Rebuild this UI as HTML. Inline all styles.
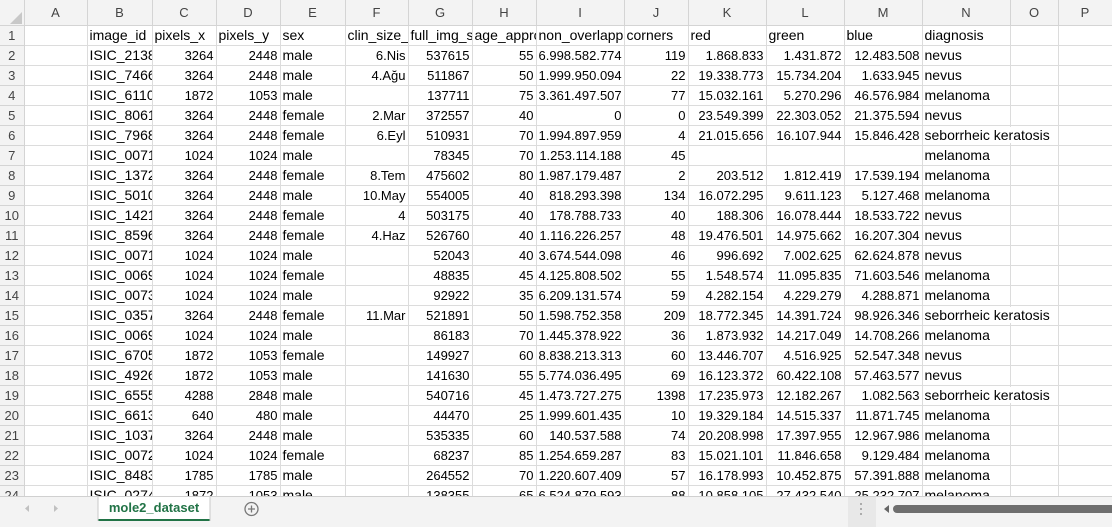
<!DOCTYPE html>
<html><head><meta charset="utf-8"><style>
body{margin:0;width:1112px;height:526px;overflow:hidden;background:#fff;font-family:"Liberation Sans",sans-serif;font-size:14px;position:relative}
table{border-collapse:collapse;table-layout:fixed;position:absolute;left:0;top:0;width:1112px}
td,th{height:19px;padding:0 2px;white-space:nowrap;overflow:hidden;border-right:1px solid #dcdcdc;border-bottom:1px solid #dcdcdc;color:#000;font-weight:normal;text-align:left;line-height:19px}
thead th{height:25px;background:#f3f3f3;color:#444;text-align:center;border-color:#d4d4d4;font-size:13px}
tbody th{background:#f3f3f3;color:#444;text-align:center;border-color:#d4d4d4;padding:0;font-size:13px}
td.n{text-align:right;font-size:13px}
td.v{overflow:visible}
td.v span{position:relative;z-index:2;background:#fff;padding-right:3px}
.bar{position:absolute;left:0;top:496px;width:1112px;height:30px;background:#f3f3f3;border-top:1px solid #d0d0d0;z-index:3}
</style></head><body>
<table>
<colgroup><col style="width:24px"><col style="width:63px"><col style="width:65px"><col style="width:64px"><col style="width:64px"><col style="width:65px"><col style="width:63px"><col style="width:64px"><col style="width:64px"><col style="width:88px"><col style="width:64px"><col style="width:78px"><col style="width:78px"><col style="width:78px"><col style="width:88px"><col style="width:48px"><col style="width:54px"></colgroup>
<thead><tr><th><svg width="12" height="12" style="vertical-align:-8px;margin-left:8px"><path d="M12 0V12H0Z" fill="#c8c8c8"/></svg></th><th>A</th><th>B</th><th>C</th><th>D</th><th>E</th><th>F</th><th>G</th><th>H</th><th>I</th><th>J</th><th>K</th><th>L</th><th>M</th><th>N</th><th>O</th><th>P</th></tr></thead>
<tbody>
<tr><th>1</th><td></td><td>image_id</td><td>pixels_x</td><td>pixels_y</td><td>sex</td><td>clin_size_</td><td>full_img_s</td><td>age_appro</td><td>non_overlapp</td><td>corners</td><td>red</td><td>green</td><td>blue</td><td>diagnosis</td><td></td><td></td></tr>
<tr><th>2</th><td></td><td>ISIC_21384</td><td class=n>3264</td><td class=n>2448</td><td>male</td><td class=n>6.Nis</td><td class=n>537615</td><td class=n>55</td><td class=n>6.998.582.774</td><td class=n>119</td><td class=n>1.868.833</td><td class=n>1.431.872</td><td class=n>12.483.508</td><td>nevus</td><td></td><td></td></tr>
<tr><th>3</th><td></td><td>ISIC_74661</td><td class=n>3264</td><td class=n>2448</td><td>male</td><td class=n>4.Ağu</td><td class=n>511867</td><td class=n>50</td><td class=n>1.999.950.094</td><td class=n>22</td><td class=n>19.338.773</td><td class=n>15.734.204</td><td class=n>1.633.945</td><td>nevus</td><td></td><td></td></tr>
<tr><th>4</th><td></td><td>ISIC_61108</td><td class=n>1872</td><td class=n>1053</td><td>male</td><td></td><td class=n>137711</td><td class=n>75</td><td class=n>3.361.497.507</td><td class=n>77</td><td class=n>15.032.161</td><td class=n>5.270.296</td><td class=n>46.576.984</td><td>melanoma</td><td></td><td></td></tr>
<tr><th>5</th><td></td><td>ISIC_80616</td><td class=n>3264</td><td class=n>2448</td><td>female</td><td class=n>2.Mar</td><td class=n>372557</td><td class=n>40</td><td class=n>0</td><td class=n>0</td><td class=n>23.549.399</td><td class=n>22.303.052</td><td class=n>21.375.594</td><td>nevus</td><td></td><td></td></tr>
<tr><th>6</th><td></td><td>ISIC_79688</td><td class=n>3264</td><td class=n>2448</td><td>female</td><td class=n>6.Eyl</td><td class=n>510931</td><td class=n>70</td><td class=n>1.994.897.959</td><td class=n>4</td><td class=n>21.015.656</td><td class=n>16.107.944</td><td class=n>15.846.428</td><td class=v><span>seborrheic keratosis</span></td><td></td><td></td></tr>
<tr><th>7</th><td></td><td>ISIC_00710</td><td class=n>1024</td><td class=n>1024</td><td>male</td><td></td><td class=n>78345</td><td class=n>70</td><td class=n>1.253.114.188</td><td class=n>45</td><td></td><td></td><td></td><td>melanoma</td><td></td><td></td></tr>
<tr><th>8</th><td></td><td>ISIC_13729</td><td class=n>3264</td><td class=n>2448</td><td>female</td><td class=n>8.Tem</td><td class=n>475602</td><td class=n>80</td><td class=n>1.987.179.487</td><td class=n>2</td><td class=n>203.512</td><td class=n>1.812.419</td><td class=n>17.539.194</td><td>melanoma</td><td></td><td></td></tr>
<tr><th>9</th><td></td><td>ISIC_50102</td><td class=n>3264</td><td class=n>2448</td><td>male</td><td class=n>10.May</td><td class=n>554005</td><td class=n>40</td><td class=n>818.293.398</td><td class=n>134</td><td class=n>16.072.295</td><td class=n>9.611.123</td><td class=n>5.127.468</td><td>melanoma</td><td></td><td></td></tr>
<tr><th>10</th><td></td><td>ISIC_14219</td><td class=n>3264</td><td class=n>2448</td><td>female</td><td class=n>4</td><td class=n>503175</td><td class=n>40</td><td class=n>178.788.733</td><td class=n>40</td><td class=n>188.306</td><td class=n>16.078.444</td><td class=n>18.533.722</td><td>nevus</td><td></td><td></td></tr>
<tr><th>11</th><td></td><td>ISIC_85964</td><td class=n>3264</td><td class=n>2448</td><td>female</td><td class=n>4.Haz</td><td class=n>526760</td><td class=n>40</td><td class=n>1.116.226.257</td><td class=n>48</td><td class=n>19.476.501</td><td class=n>14.975.662</td><td class=n>16.207.304</td><td>nevus</td><td></td><td></td></tr>
<tr><th>12</th><td></td><td>ISIC_00711</td><td class=n>1024</td><td class=n>1024</td><td>male</td><td></td><td class=n>52043</td><td class=n>40</td><td class=n>3.674.544.098</td><td class=n>46</td><td class=n>996.692</td><td class=n>7.002.625</td><td class=n>62.624.878</td><td>nevus</td><td></td><td></td></tr>
<tr><th>13</th><td></td><td>ISIC_00699</td><td class=n>1024</td><td class=n>1024</td><td>female</td><td></td><td class=n>48835</td><td class=n>45</td><td class=n>4.125.808.502</td><td class=n>55</td><td class=n>1.548.574</td><td class=n>11.095.835</td><td class=n>71.603.546</td><td>melanoma</td><td></td><td></td></tr>
<tr><th>14</th><td></td><td>ISIC_00730</td><td class=n>1024</td><td class=n>1024</td><td>male</td><td></td><td class=n>92922</td><td class=n>35</td><td class=n>6.209.131.574</td><td class=n>59</td><td class=n>4.282.154</td><td class=n>4.229.279</td><td class=n>4.288.871</td><td>melanoma</td><td></td><td></td></tr>
<tr><th>15</th><td></td><td>ISIC_03579</td><td class=n>3264</td><td class=n>2448</td><td>female</td><td class=n>11.Mar</td><td class=n>521891</td><td class=n>50</td><td class=n>1.598.752.358</td><td class=n>209</td><td class=n>18.772.345</td><td class=n>14.391.724</td><td class=n>98.926.346</td><td class=v><span>seborrheic keratosis</span></td><td></td><td></td></tr>
<tr><th>16</th><td></td><td>ISIC_00693</td><td class=n>1024</td><td class=n>1024</td><td>male</td><td></td><td class=n>86183</td><td class=n>70</td><td class=n>1.445.378.922</td><td class=n>36</td><td class=n>1.873.932</td><td class=n>14.217.049</td><td class=n>14.708.266</td><td>melanoma</td><td></td><td></td></tr>
<tr><th>17</th><td></td><td>ISIC_67059</td><td class=n>1872</td><td class=n>1053</td><td>female</td><td></td><td class=n>149927</td><td class=n>60</td><td class=n>8.838.213.313</td><td class=n>60</td><td class=n>13.446.707</td><td class=n>4.516.925</td><td class=n>52.547.348</td><td>nevus</td><td></td><td></td></tr>
<tr><th>18</th><td></td><td>ISIC_49260</td><td class=n>1872</td><td class=n>1053</td><td>male</td><td></td><td class=n>141630</td><td class=n>55</td><td class=n>5.774.036.495</td><td class=n>69</td><td class=n>16.123.372</td><td class=n>60.422.108</td><td class=n>57.463.577</td><td>nevus</td><td></td><td></td></tr>
<tr><th>19</th><td></td><td>ISIC_65550</td><td class=n>4288</td><td class=n>2848</td><td>male</td><td></td><td class=n>540716</td><td class=n>45</td><td class=n>1.473.727.275</td><td class=n>1398</td><td class=n>17.235.973</td><td class=n>12.182.267</td><td class=n>1.082.563</td><td class=v><span>seborrheic keratosis</span></td><td></td><td></td></tr>
<tr><th>20</th><td></td><td>ISIC_66131</td><td class=n>640</td><td class=n>480</td><td>male</td><td></td><td class=n>44470</td><td class=n>25</td><td class=n>1.999.601.435</td><td class=n>10</td><td class=n>19.329.184</td><td class=n>14.515.337</td><td class=n>11.871.745</td><td>melanoma</td><td></td><td></td></tr>
<tr><th>21</th><td></td><td>ISIC_10373</td><td class=n>3264</td><td class=n>2448</td><td>male</td><td></td><td class=n>535335</td><td class=n>60</td><td class=n>140.537.588</td><td class=n>74</td><td class=n>20.208.998</td><td class=n>17.397.955</td><td class=n>12.967.986</td><td>melanoma</td><td></td><td></td></tr>
<tr><th>22</th><td></td><td>ISIC_00720</td><td class=n>1024</td><td class=n>1024</td><td>female</td><td></td><td class=n>68237</td><td class=n>85</td><td class=n>1.254.659.287</td><td class=n>83</td><td class=n>15.021.101</td><td class=n>11.846.658</td><td class=n>9.129.484</td><td>melanoma</td><td></td><td></td></tr>
<tr><th>23</th><td></td><td>ISIC_84833</td><td class=n>1785</td><td class=n>1785</td><td>male</td><td></td><td class=n>264552</td><td class=n>70</td><td class=n>1.220.607.409</td><td class=n>57</td><td class=n>16.178.993</td><td class=n>10.452.875</td><td class=n>57.391.888</td><td>melanoma</td><td></td><td></td></tr>
<tr><th>24</th><td></td><td>ISIC_02741</td><td class=n>1872</td><td class=n>1053</td><td>male</td><td></td><td class=n>138355</td><td class=n>65</td><td class=n>6.524.879.593</td><td class=n>88</td><td class=n>10.858.105</td><td class=n>27.432.540</td><td class=n>25.232.707</td><td>melanoma</td><td></td><td></td></tr>
</tbody></table>
<div class="bar">
<svg width="1112" height="30" style="position:absolute;left:0;top:0">
<path d="M29 8L25 11.5L29 15Z" fill="#c0c0c0"/>
<path d="M54 8L58 11.5L54 15Z" fill="#c0c0c0"/>
<rect x="98" y="-1" width="112" height="25" fill="#fff"/>
<rect x="98" y="22" width="112" height="2" fill="#217346"/>
<line x1="98" y1="0" x2="98" y2="24" stroke="#c8c8c8"/>
<line x1="210" y1="0" x2="210" y2="24" stroke="#c8c8c8"/>
<circle cx="251.5" cy="12" r="6.5" fill="none" stroke="#777" stroke-width="1.3"/>
<path d="M248 12H255M251.5 8.5V15.5" stroke="#777" stroke-width="1.3"/>
<rect x="848" y="0" width="28" height="30" fill="#e8e8e8"/>
<circle cx="861" cy="7" r="1" fill="#999"/><circle cx="861" cy="12" r="1" fill="#999"/><circle cx="861" cy="17" r="1" fill="#999"/>
<path d="M889 8L884 12L889 16Z" fill="#666"/>
<rect x="893" y="8" width="225" height="8" rx="4" fill="#6e6e6e"/>
</svg>
<div style="position:absolute;left:98px;top:3px;width:112px;text-align:center;color:#217346;font-weight:bold;font-size:13px">mole2_dataset</div>
</div>
</body></html>
